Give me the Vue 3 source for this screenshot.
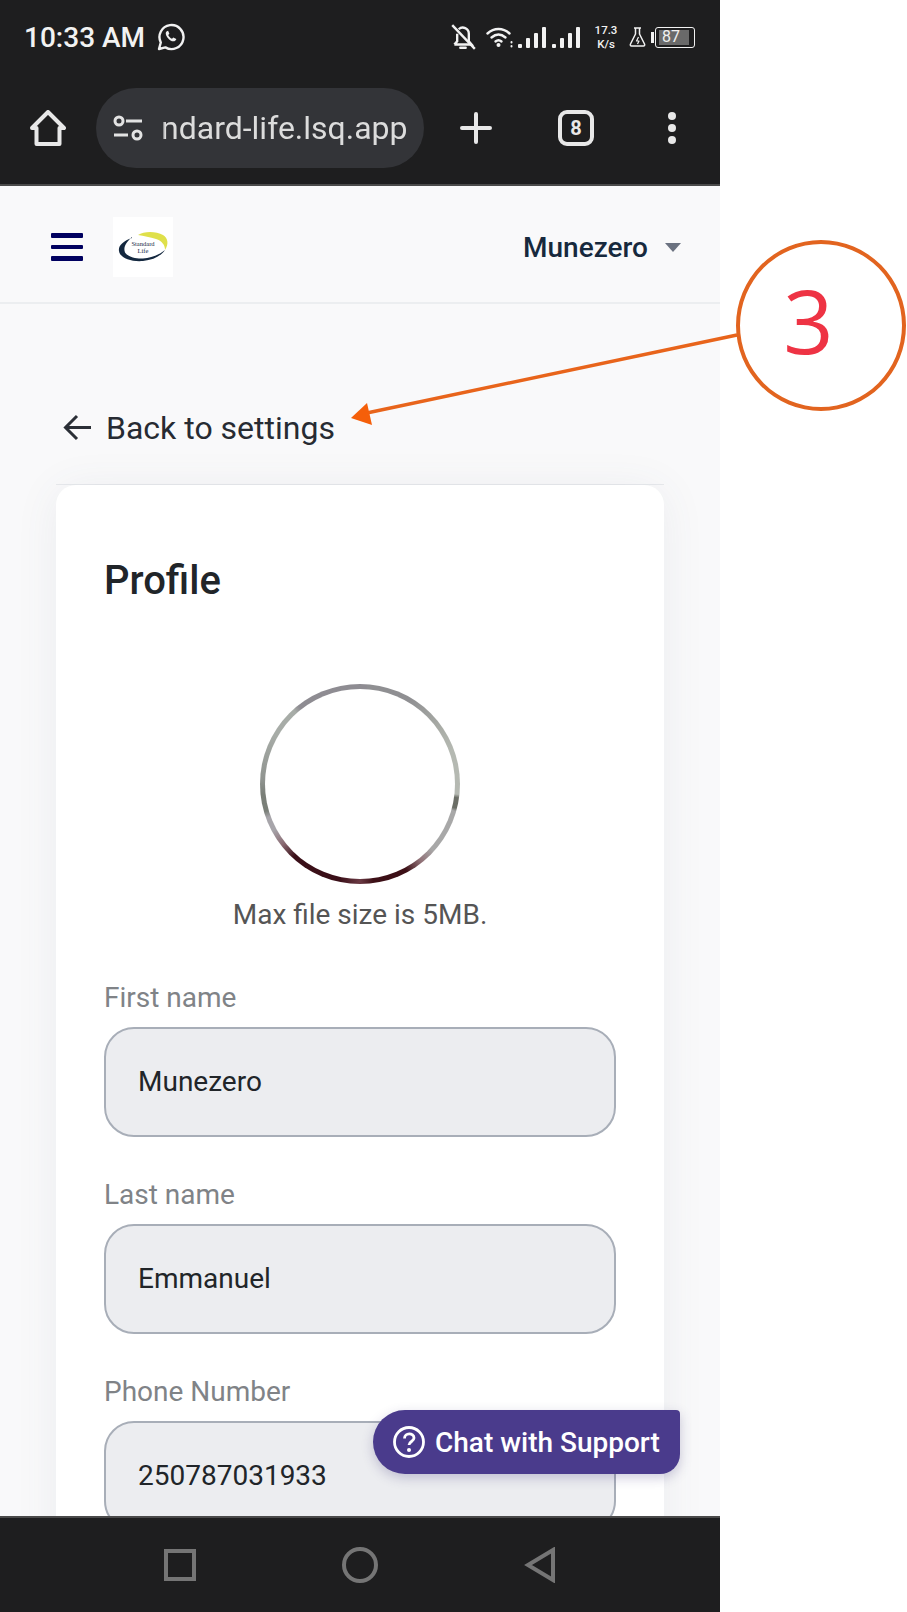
<script setup>
  const fields = [
    { label: 'First name', value: 'Munezero' },
    { label: 'Last name', value: 'Emmanuel' },
    { label: 'Phone Number', value: '250787031933' },
  ]
  const signals = [0, 1]
</script>

<template>
  <div class="shot">
    <div class="phone">
      <header class="chrome">
        <div class="status">
          <div class="status-left">
            <span class="time">10:33 AM</span>
            <svg class="wa" viewBox="0 0 28 28" fill="none" stroke="#f2f2f2" stroke-width="2.4">
              <path d="M2 26l1.8-6.5A12 12 0 1 1 8.4 24.4z" stroke-linejoin="round" />
              <path d="M9.8 8.2c-1.6 1.2-1.4 3.6.6 6.2 2.4 3 5 4.4 7 3.8 1-.3 1.8-1.2 1.9-2.2l-3-1.6-1.3 1.4c-1.6-.6-3-2-3.8-3.8l1.2-1.2-1.3-3z" fill="#f2f2f2" stroke="none" />
            </svg>
          </div>
          <div class="status-right">
            <svg class="bell" viewBox="0 0 24 26" fill="none" stroke="#f2f2f2" stroke-width="2.2">
              <path d="M4 20h16l-2.6-3V10A5.6 5.6 0 0 0 8 5.8M6.600 10v7L4 20" />
              <path d="M9.500 23h5" stroke-linecap="round" />
              <path d="M2 2l21 22" />
            </svg>
            <svg class="wifi" viewBox="0 0 28 24" fill="none" stroke="#f2f2f2" stroke-width="2.4" stroke-linecap="round">
              <path d="M1.500 8.500C8 2.500 17 2.500 23.500 8.500" />
              <path d="M5.500 12.500c4.500-4 9.500-4 14 0" />
              <path d="M9.500 16.500c2-1.800 4-1.800 6 0" />
              <circle cx="12.500" cy="20" r="2" fill="#f2f2f2" stroke="none" />
              <path d="M25.500 17v.5M25.500 21v.5" stroke-width="2" />
            </svg>
            <div v-for="s in signals" :key="s" class="signal">
              <i class="b1"></i><i class="b2"></i><i class="b3"></i><i class="b4"></i>
            </div>
            <div class="speed"><span>17.3</span><span>K/s</span></div>
            <svg class="flask" viewBox="0 0 18 20" fill="none" stroke="#f2f2f2" stroke-width="1.500" stroke-linejoin="round">
              <path d="M5 1h7M6.500 1v6L1.500 17c-.5 1 0 2 1 2h12c1 0 1.500-1 1-2l-5-10V1" />
              <path d="M9.500 10l-2 4h2.500l-1.500 3" stroke-width="1.200" />
            </svg>
            <div class="battery">
              <span class="nub"></span>
              <div class="cell"><span class="charge">87</span></div>
            </div>
          </div>
        </div>
        <div class="toolbar">
          <svg class="home" viewBox="0 0 36 36" fill="none" stroke="#e8e8e8" stroke-width="4" stroke-linejoin="round">
            <path d="M2 18L18 2l16 16h-4.500v16h-23V18z" />
          </svg>
          <div class="url">
            <svg class="tune" viewBox="0 0 30 26" fill="none" stroke="#e3e3e3" stroke-width="3">
              <circle cx="6" cy="6" r="4" />
              <path d="M13 6h16M1 20h14" />
              <circle cx="24" cy="20" r="4" />
            </svg>
            <div class="url-text"><span>ndard-life.lsq.app</span></div>
          </div>
          <svg class="plus" viewBox="0 0 32 32" stroke="#e8e8e8" stroke-width="4" stroke-linecap="round">
            <path d="M16 2v28M2 16h28" />
          </svg>
          <div class="tabs">8</div>
          <div class="dots"><i></i><i></i><i></i></div>
        </div>
      </header>

      <main class="page">
        <div class="topbar">
          <div class="burger"><i></i><i></i><i></i></div>
          <div class="logo">
            <svg class="swoosh" viewBox="0 0 60 60" fill="none">
              <path d="M25 18C31 14 43 14 50 18c5 3 6 9 2 15 0-5-3-9-9-11-6-2-12-3-18-4z" fill="#dfe04a" />
              <path d="M19 21C10 24 5 29 6 34c1 7 12 11 24 10 10-1 18-5 22-11-6 5-14 8-22 8.500-7 .4-15-1.500-18-6-2-5 1-10 7-15.500z" fill="#14283f" />
            </svg>
            <span class="logo-text">Standard<br />Life</span>
          </div>
          <div class="user">
            <span>Munezero</span>
            <i class="caret"></i>
          </div>
        </div>

        <div class="content">
          <div class="back">
            <svg class="back-arrow" viewBox="0 0 28 28" fill="none" stroke="#2b2f36" stroke-width="3">
              <path d="M14 2L2.500 13.500 14 25M3 13.500h25" />
            </svg>
            <span>Back to settings</span>
          </div>

          <section class="card">
            <h1>Profile</h1>
            <div class="avatar"></div>
            <p class="hint">Max file size is 5MB.</p>
            <div v-for="f in fields" :key="f.label" class="field">
              <label>{{ f.label }}</label>
              <div class="input">{{ f.value }}</div>
            </div>
          </section>
        </div>

        <button class="chat">
          <svg viewBox="0 0 32 32" class="help" fill="none" stroke="#fff" stroke-width="2.800">
            <circle cx="16" cy="16" r="14.500" />
            <path d="M11.500 12.500c0-6 9.500-6 9.500-.5 0 3.500-5 3.500-5 7" />
            <circle cx="16" cy="24" r="2" fill="#fff" stroke="none" />
          </svg>
          Chat with Support
        </button>
      </main>

      <footer class="nav">
        <span class="nav-square"></span>
        <span class="nav-circle"></span>
        <svg class="nav-back" viewBox="0 0 32 36" fill="none" stroke="#757575" stroke-width="4">
          <path d="M29 3v30L4 18z" />
        </svg>
      </footer>
    </div>

    <!-- annotation drawn over the screenshot -->
    <svg class="note-arrow" viewBox="0 0 907 1612" fill="none">
      <path d="M737 335L362 414" stroke="#e8641b" stroke-width="3.500" />
      <path d="M351 418L367 403 372 425z" fill="#f55f0a" />
    </svg>
    <div class="note"><span>3</span></div>
  </div>
</template>

<style scoped>
  .shot {
    position: relative;
    width: 907px;
    height: 1612px;
    overflow: hidden;
    background: #fff;
    font-family: Roboto, 'Liberation Sans', sans-serif;
  }

  .phone {
    width: 720px;
    height: 1612px;
    display: flex;
    flex-direction: column;
  }

  .chrome {
    height: 186px;
    flex: none;
    box-sizing: border-box;
    background: #1e1e1f;
    border-bottom: 2px solid #4a4a4a;
  }

  .status {
    height: 74px;
    display: flex;
    align-items: center;
    justify-content: space-between;
    padding: 0 25px 0 24px;
  }

  .status-left {
    display: flex;
    align-items: center;
    gap: 12px;
  }

  .time {
    font-size: 28px;
    font-weight: 500;
    color: #f2f2f2;
  }

  .wa {
    width: 28px;
    height: 28px;
    margin-top: -1px;
  }

  .status-right {
    display: flex;
    align-items: center;
  }

  .bell {
    width: 26px;
    height: 28px;
    margin-right: 10px;
  }

  .wifi {
    width: 28px;
    height: 24px;
    margin-right: 4px;
  }

  .signal {
    display: flex;
    align-items: flex-end;
    gap: 4px;
    height: 22px;
    margin-right: 6px;
  }

  .signal i {
    width: 4px;
    background: #f2f2f2;
    border-radius: 1px;
  }

  .b1 { height: 4px; }
  .b2 { height: 10px; }
  .b3 { height: 15px; }
  .b4 { height: 21px; }

  .speed {
    display: flex;
    flex-direction: column;
    align-items: center;
    width: 26px;
    margin: 0 10px 0 7px;
    font-size: 11.500px;
    line-height: 14px;
    font-weight: 500;
    color: #f2f2f2;
  }

  .flask {
    width: 18px;
    height: 20px;
    margin-right: 4px;
  }

  .battery {
    display: flex;
    align-items: center;
  }

  .nub {
    width: 3px;
    height: 11px;
    margin-right: 1px;
    background: #f2f2f2;
  }

  .cell {
    box-sizing: border-box;
    width: 40px;
    height: 21px;
    padding: 2px 3px;
    border: 1.500px solid #f2f2f2;
    border-radius: 3px;
  }

  .charge {
    display: block;
    width: 30px;
    height: 100%;
    background: #6a6a6a;
    padding-left: 3px;
    box-sizing: border-box;
    font-size: 16px;
    line-height: 14px;
    color: #f0f0f0;
  }

  .toolbar {
    height: 110px;
    display: flex;
    align-items: center;
    padding: 0 0 2px 30px;
    box-sizing: border-box;
  }

  .home {
    width: 36px;
    height: 36px;
    margin-right: 30px;
  }

  .url {
    width: 328px;
    height: 80px;
    display: flex;
    align-items: center;
    padding-left: 17px;
    box-sizing: border-box;
    background: #333438;
    border-radius: 40px;
  }

  .tune {
    width: 30px;
    height: 26px;
    flex: none;
  }

  .url-text {
    margin-left: 18px;
    width: 248px;
    overflow: hidden;
    white-space: nowrap;
    font-size: 32px;
    color: #dcdcdc;
    -webkit-mask-image: linear-gradient(to right, transparent 0, #000 4px);
    mask-image: linear-gradient(to right, transparent 0, #000 4px);
  }

  .plus {
    width: 32px;
    height: 32px;
    margin: 0 66px 0 36px;
  }

  .tabs {
    box-sizing: border-box;
    width: 36px;
    height: 36px;
    border: 4px solid #e8e8e8;
    border-radius: 9px;
    display: flex;
    align-items: center;
    justify-content: center;
    font-size: 20px;
    font-weight: 700;
    color: #e8e8e8;
  }

  .dots {
    margin-left: 74px;
    display: flex;
    flex-direction: column;
    gap: 4px;
  }

  .dots i {
    width: 8px;
    height: 8px;
    border-radius: 50%;
    background: #e8e8e8;
  }

  .page {
    position: relative;
    flex: 1;
    min-height: 0;
    overflow: hidden;
    background: #f9f9fa;
  }

  .topbar {
    height: 118px;
    box-sizing: border-box;
    display: flex;
    align-items: center;
    padding: 6px 39px 0 51px;
    border-bottom: 2px solid #eceef0;
  }

  .burger {
    display: flex;
    flex-direction: column;
    gap: 7px;
    margin-right: 30px;
  }

  .burger i {
    width: 32px;
    height: 4.500px;
    background: #00005f;
    border-radius: 1px;
  }

  .logo {
    position: relative;
    width: 60px;
    height: 60px;
    background: #fff;
  }

  .swoosh {
    width: 60px;
    height: 60px;
  }

  .logo-text {
    position: absolute;
    left: 0;
    right: 0;
    top: 24px;
    text-align: center;
    font-family: 'Liberation Serif', serif;
    font-size: 6.500px;
    line-height: 6.500px;
    color: #14283f;
  }

  .user {
    margin-left: auto;
    display: flex;
    align-items: center;
    gap: 17px;
    font-size: 28px;
    font-weight: 500;
    color: #17293d;
  }

  .caret {
    width: 0;
    height: 0;
    border-left: 8px solid transparent;
    border-right: 8px solid transparent;
    border-top: 9px solid #6b7280;
  }

  .content {
    width: 608px;
    margin-left: 56px;
  }

  .back {
    height: 181px;
    box-sizing: border-box;
    padding: 105px 0 0 7px;
    display: flex;
    align-items: flex-start;
    gap: 15px;
    font-size: 32px;
    line-height: 38px;
    color: #272b32;
    border-bottom: 1px solid #e7e9ec;
  }

  .back-arrow {
    width: 28px;
    height: 28px;
    margin-top: 5px;
    flex: none;
  }

  .card {
    background: #fff;
    border-radius: 20px;
    padding: 69px 48px 120px;
    box-shadow: 0 4px 44px rgba(80, 90, 120, 0.08);
  }

  .card h1 {
    margin: 0;
    font-size: 40px;
    line-height: 54px;
    font-weight: 500;
    color: #212529;
  }

  .avatar {
    position: relative;
    width: 200px;
    height: 200px;
    margin: 76px auto 0;
    border-radius: 50%;
    background: conic-gradient(#8e8c92 0deg 4deg, #8f8f92 4deg 30deg, #a9aca6 55deg, #b5b9b2 70deg 96deg, #6b6e66 98deg 104deg, #a8a8a8 106deg 132deg, #8f6f75 142deg, #3c0f16 152deg 172deg, #6b3a44 180deg, #3a0f18 192deg 222deg, #8a6a72 232deg, #a7a5aa 242deg 250deg, #7a7f78 254deg 264deg, #8f938f 272deg, #a7aca7 300deg 318deg, #8e8c92 322deg 360deg);
  }

  .avatar::after {
    content: '';
    position: absolute;
    inset: 5px;
    border-radius: 50%;
    background: #fff;
  }

  .hint {
    margin: 13px 0 0;
    text-align: center;
    font-size: 28px;
    line-height: 36px;
    color: #555;
  }

  .field {
    margin-top: 47px;
  }

  .field + .field {
    margin-top: 40px;
  }

  .field label {
    display: block;
    font-size: 28px;
    line-height: 36px;
    color: #808387;
    margin-bottom: 11px;
  }

  .input {
    box-sizing: border-box;
    height: 110px;
    display: flex;
    align-items: center;
    padding: 0 0 2px 32px;
    background: #ecedf0;
    border: 2px solid #a8aeb8;
    border-radius: 30px;
    font-size: 28px;
    color: #212529;
  }

  .chat {
    position: absolute;
    left: 373px;
    top: 1224px;
    width: 307px;
    height: 64px;
    display: flex;
    align-items: center;
    gap: 10px;
    padding: 0 0 0 20px;
    border: 0;
    background: #4a3b8c;
    border-radius: 32px 4px 20px 32px;
    box-shadow: 0 4px 12px rgba(60, 50, 120, 0.25);
    font-family: inherit;
    font-size: 28px;
    font-weight: 500;
    white-space: nowrap;
    color: #fff;
  }

  .help {
    width: 32px;
    height: 32px;
    flex: none;
  }

  .nav {
    height: 96px;
    flex: none;
    box-sizing: border-box;
    position: relative;
    z-index: 2;
    display: grid;
    grid-template-columns: 180px 180px 180px;
    justify-content: center;
    align-items: center;
    justify-items: center;
    background: #1e1e1f;
    border-top: 2px solid #4a4a4a;
  }

  .nav-square {
    box-sizing: border-box;
    width: 32px;
    height: 32px;
    border: 4px solid #757575;
  }

  .nav-circle {
    box-sizing: border-box;
    width: 36px;
    height: 36px;
    border: 4px solid #757575;
    border-radius: 50%;
  }

  .nav-back {
    width: 32px;
    height: 36px;
  }

  .note-arrow {
    position: absolute;
    inset: 0;
    width: 907px;
    height: 1612px;
    pointer-events: none;
  }

  .note {
    position: absolute;
    left: 736px;
    top: 240px;
    box-sizing: border-box;
    width: 170px;
    height: 171px;
    border: 4px solid #e2641f;
    border-radius: 50%;
    background: #fff;
    display: flex;
    align-items: center;
    justify-content: center;
  }

  .note span {
    margin: -12px 0 0 -25px;
    font-family: 'Open Sans', sans-serif;
    font-weight: 500;
    font-size: 88px;
    line-height: 1;
    color: #ee3344;
  }
</style>
